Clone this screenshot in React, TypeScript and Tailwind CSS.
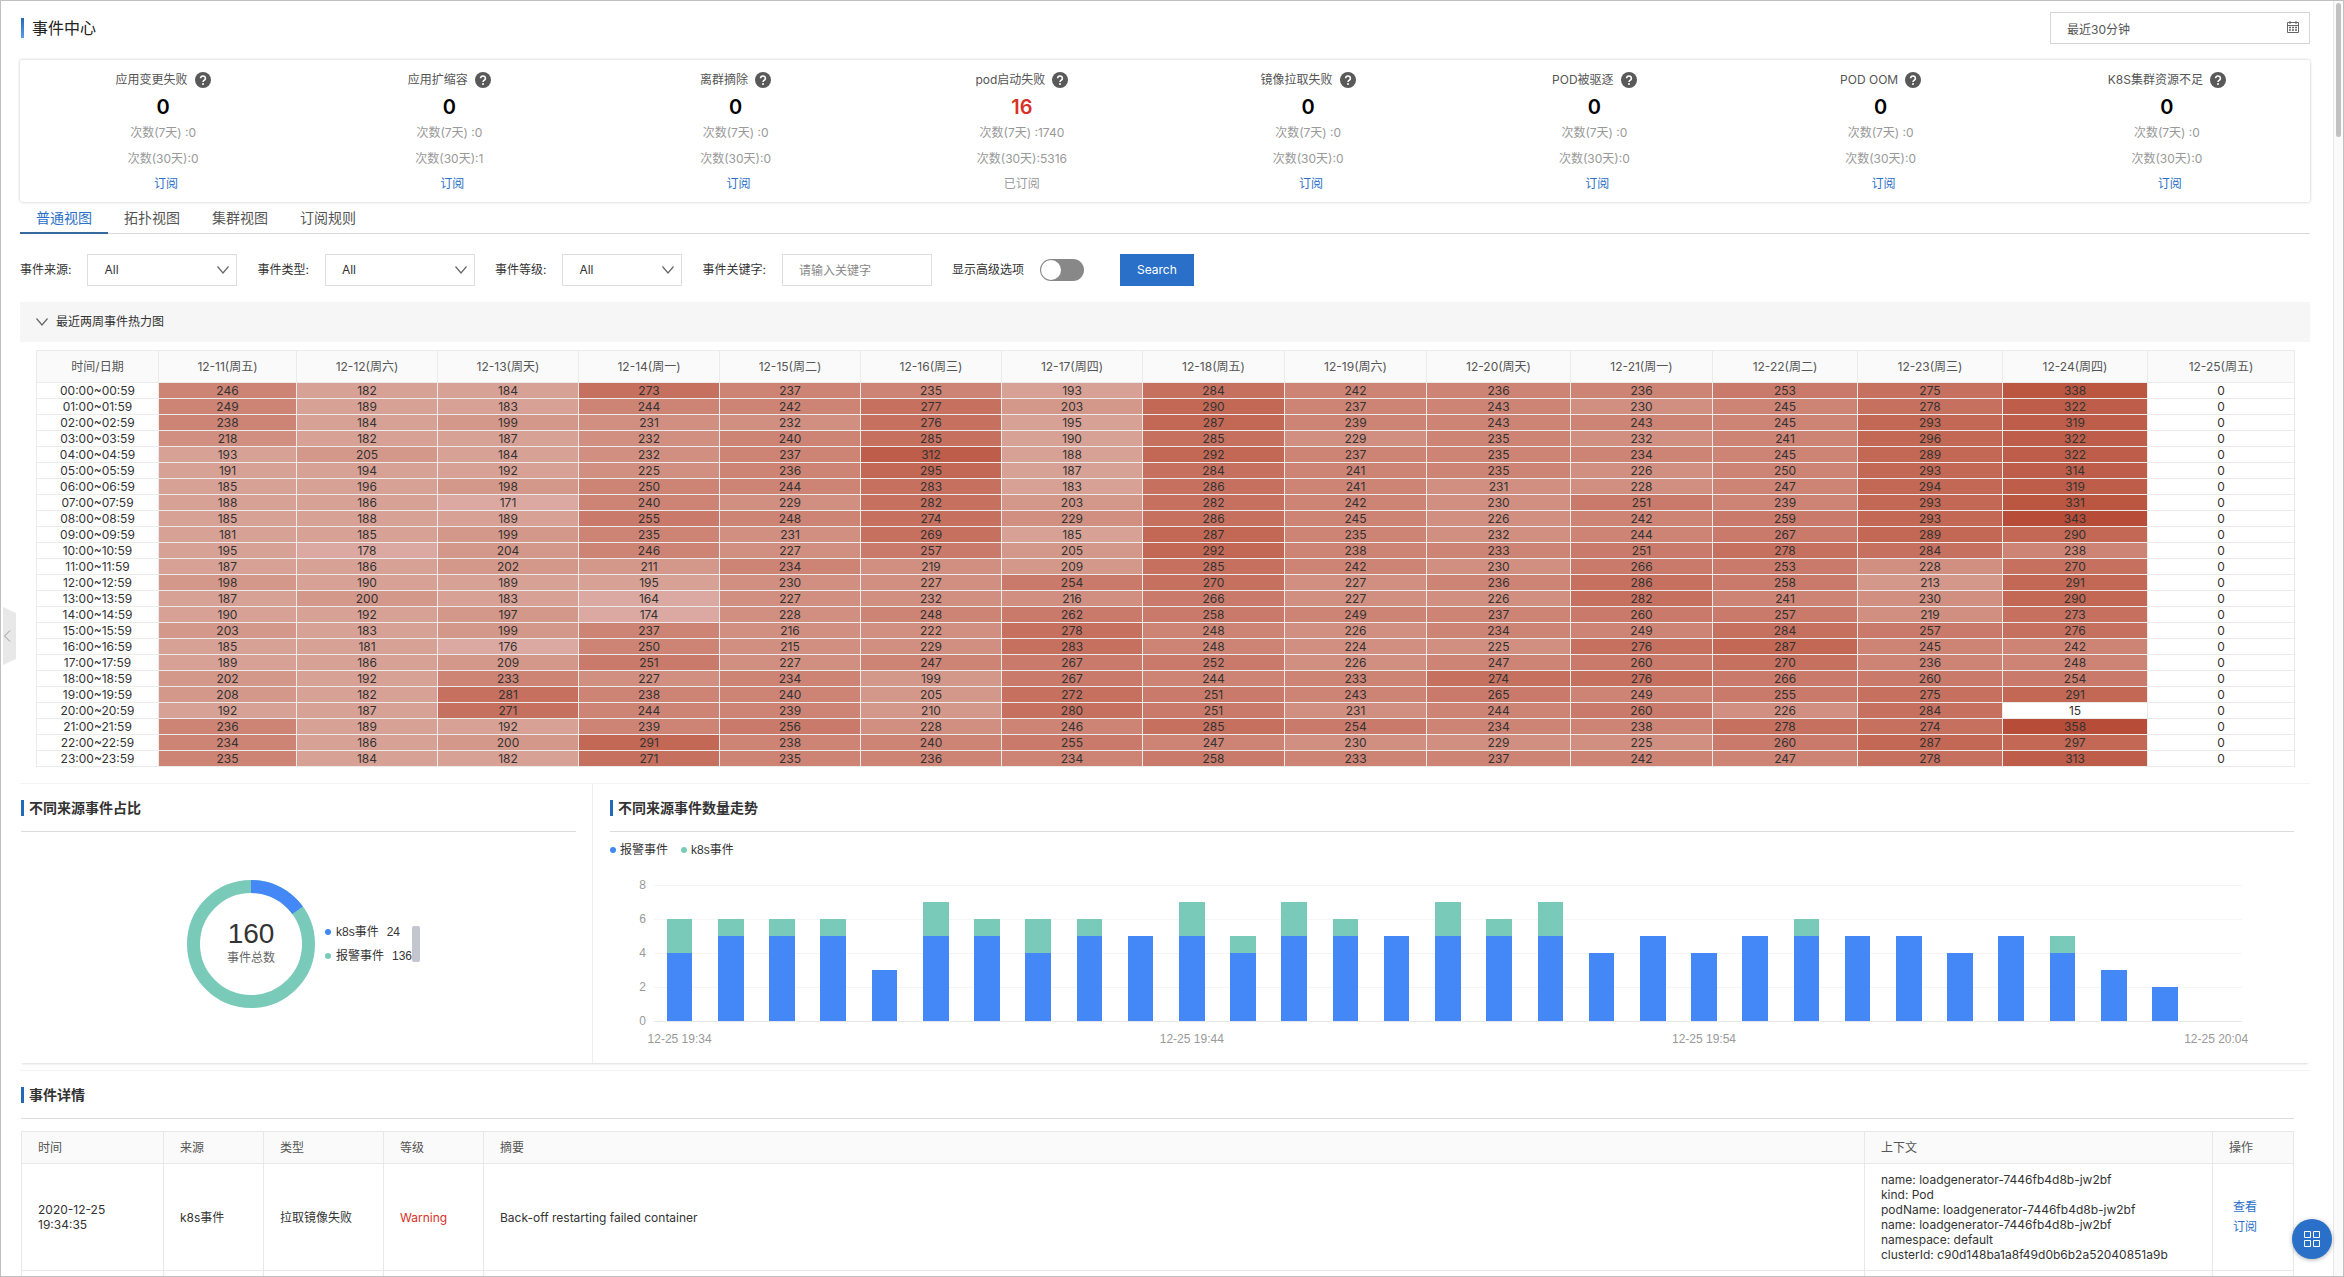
import { ReactNode } from "react";
import { clsx } from "clsx";

const stats = [
  { name: "应用变更失败", count: 0, week: 0, month: 0 },
  { name: "应用扩缩容", count: 0, week: 0, month: 1 },
  { name: "离群摘除", count: 0, week: 0, month: 0 },
  { name: "pod启动失败", count: 16, week: 1740, month: 5316, subscribed: true },
  { name: "镜像拉取失败", count: 0, week: 0, month: 0 },
  { name: "POD被驱逐", count: 0, week: 0, month: 0 },
  { name: "POD OOM", count: 0, week: 0, month: 0 },
  { name: "K8S集群资源不足", count: 0, week: 0, month: 0 },
];

const tabs = ["普通视图", "拓扑视图", "集群视图", "订阅规则"];

const days = [
  { label: "12-11(周五)", width: 138 },
  { label: "12-12(周六)", width: 141 },
  { label: "12-13(周天)", width: 141 },
  { label: "12-14(周一)", width: 141 },
  { label: "12-15(周二)", width: 141 },
  { label: "12-16(周三)", width: 141 },
  { label: "12-17(周四)", width: 141 },
  { label: "12-18(周五)", width: 142 },
  { label: "12-19(周六)", width: 142 },
  { label: "12-20(周天)", width: 144 },
  { label: "12-21(周一)", width: 142 },
  { label: "12-22(周二)", width: 145 },
  { label: "12-23(周三)", width: 145 },
  { label: "12-24(周四)", width: 145 },
  { label: "12-25(周五)", width: 147 },
];

const heat = [
  [246, 182, 184, 273, 237, 235, 193, 284, 242, 236, 236, 253, 275, 338, 0],
  [249, 189, 183, 244, 242, 277, 203, 290, 237, 243, 230, 245, 278, 322, 0],
  [238, 184, 199, 231, 232, 276, 195, 287, 239, 243, 243, 245, 293, 319, 0],
  [218, 182, 187, 232, 240, 285, 190, 285, 229, 235, 232, 241, 296, 322, 0],
  [193, 205, 184, 232, 237, 312, 188, 292, 237, 235, 234, 245, 289, 322, 0],
  [191, 194, 192, 225, 236, 295, 187, 284, 241, 235, 226, 250, 293, 314, 0],
  [185, 196, 198, 250, 244, 283, 183, 286, 241, 231, 228, 247, 294, 319, 0],
  [188, 186, 171, 240, 229, 282, 203, 282, 242, 230, 251, 239, 293, 331, 0],
  [185, 188, 189, 255, 248, 274, 229, 286, 245, 226, 242, 259, 293, 343, 0],
  [181, 185, 199, 235, 231, 269, 185, 287, 235, 232, 244, 267, 289, 290, 0],
  [195, 178, 204, 246, 227, 257, 205, 292, 238, 233, 251, 278, 284, 238, 0],
  [187, 186, 202, 211, 234, 219, 209, 285, 242, 230, 266, 253, 228, 270, 0],
  [198, 190, 189, 195, 230, 227, 254, 270, 227, 236, 286, 258, 213, 291, 0],
  [187, 200, 183, 164, 227, 232, 216, 266, 227, 226, 282, 241, 230, 290, 0],
  [190, 192, 197, 174, 228, 248, 262, 258, 249, 237, 260, 257, 219, 273, 0],
  [203, 183, 199, 237, 216, 222, 278, 248, 226, 234, 249, 284, 257, 276, 0],
  [185, 181, 176, 250, 215, 229, 283, 248, 224, 225, 276, 287, 245, 242, 0],
  [189, 186, 209, 251, 227, 247, 267, 252, 226, 247, 260, 270, 236, 248, 0],
  [202, 192, 233, 227, 234, 199, 267, 244, 233, 274, 276, 266, 260, 254, 0],
  [208, 182, 281, 238, 240, 205, 272, 251, 243, 265, 249, 255, 275, 291, 0],
  [192, 187, 271, 244, 239, 210, 280, 251, 231, 244, 260, 226, 284, 15, 0],
  [236, 189, 192, 239, 256, 228, 246, 285, 254, 234, 238, 278, 274, 358, 0],
  [234, 186, 200, 291, 238, 240, 255, 247, 230, 229, 225, 260, 287, 297, 0],
  [235, 184, 182, 271, 235, 236, 234, 258, 233, 237, 242, 247, 278, 313, 0],
];

const MAX_HEAT = 358;

// lightest to darkest, each one covers a twentieth of the maximum
const heatColors = [
  "bg-[#dba9a1]",
  "bg-[#d8a196]",
  "bg-[#d4988a]",
  "bg-[#d08f80]",
  "bg-[#cd8475]",
  "bg-[#c97a6a]",
  "bg-[#c67060]",
  "bg-[#c26854]",
  "bg-[#be5e4a]",
  "bg-[#bb5641]",
  "bg-[#b74d38]",
];

function heatColor(value: number) {
  const level = Math.floor((value / MAX_HEAT) * 20);
  if (level < 9) return "bg-white";
  return heatColors[Math.min(level - 9, heatColors.length - 1)];
}

function hourRange(hour: number) {
  const h = String(hour).padStart(2, "0");
  return `${h}:00~${h}:59`;
}

// [报警事件, k8s事件] per minute
const trend = [
  [4, 2], [5, 1], [5, 1], [5, 1], [3, 0], [5, 2], [5, 1], [4, 2], [5, 1], [5, 0],
  [5, 2], [4, 1], [5, 2], [5, 1], [5, 0], [5, 2], [5, 1], [5, 2], [4, 0], [5, 0],
  [4, 0], [5, 0], [5, 1], [5, 0], [5, 0], [4, 0], [5, 0], [4, 1], [3, 0], [2, 0],
  [0, 0],
];

const trendLabels: Record<number, string> = {
  0: "12-25 19:34",
  10: "12-25 19:44",
  20: "12-25 19:54",
  30: "12-25 20:04",
};

const contextLines = [
  "name: loadgenerator-7446fb4d8b-jw2bf",
  "kind: Pod",
  "podName: loadgenerator-7446fb4d8b-jw2bf",
  "name: loadgenerator-7446fb4d8b-jw2bf",
  "namespace: default",
  "clusterId: c90d148ba1a8f49d0b6b2a52040851a9b",
];

function HelpIcon() {
  return (
    <svg viewBox="0 0 16 16" className="size-4" aria-hidden="true">
      <circle cx="8" cy="8" r="8" fill="#595959" />
      <path d="M5.6 6.3a2.4 2.3 0 1 1 3.7 1.9C8.4 8.8 8 9.1 8 10" fill="none" stroke="#fff" strokeWidth="1.6" />
      <circle cx="8" cy="12" r="1" fill="#fff" />
    </svg>
  );
}

function CalendarIcon({ className }: { className?: string }) {
  return (
    <svg viewBox="0 0 12 12" className={clsx("size-3", className)} fill="none" stroke="#666" aria-hidden="true">
      <path d="M.5 1.5h11v10H.5zM.5 4.5h11M3 0v3M9 0v3" />
      <path d="M2 6.5h8M2 9h8" strokeWidth="1.4" strokeDasharray="2 1" />
    </svg>
  );
}

function ChevronDown({ className }: { className?: string }) {
  return (
    <svg viewBox="0 0 12 8" className={clsx("h-2 w-3", className)} fill="none" stroke="#666" strokeWidth="1.2" aria-hidden="true">
      <path d="M.5.5 6 7 11.5.5" />
    </svg>
  );
}

function SectionTitle({ children }: { children: ReactNode }) {
  return (
    <div className="flex h-12 items-center border-b border-[#dcdcdc]">
      <h2 className="border-l-3 border-[#2468b8] pl-[5px] text-sm leading-4 font-semibold text-[#333]">{children}</h2>
    </div>
  );
}

function Select({ id, label, className }: { id: string; label: string; className: string }) {
  return (
    <div className="mr-5 flex items-center gap-4">
      <label htmlFor={id}>{label}</label>
      <div className={clsx("relative", className)}>
        <select id={id} className="h-8 w-full appearance-none border border-[#dedede] bg-white pl-4 text-[#333]">
          <option>All</option>
        </select>
        <ChevronDown className="pointer-events-none absolute top-3 right-2" />
      </div>
    </div>
  );
}

function StatPanel() {
  return (
    <section className="grid grid-cols-8 rounded-xs py-2 text-center shadow-[0_0_3px_rgba(0,0,0,0.25)]">
      {stats.map((s) => (
        <div key={s.name} className="flex flex-col items-center">
          <div className="flex h-6 items-center gap-[7px] text-[#555]">
            {s.name}
            <HelpIcon />
          </div>
          <strong className={clsx("text-xl leading-[30px] font-semibold", s.count ? "text-[#d93026]" : "text-black")}>
            {s.count}
          </strong>
          <span className="h-[26px] leading-[22px] text-[#999]">次数(7天) :{s.week}</span>
          <span className="h-[26px] leading-[22px] text-[#999]">次数(30天):{s.month}</span>
          {s.subscribed ? (
            <span className="leading-5 text-[#999]">已订阅</span>
          ) : (
            <a href="#" className="pl-[6px] leading-5 text-[#2a70c8]">订阅</a>
          )}
        </div>
      ))}
    </section>
  );
}

function Filters() {
  return (
    <form className="flex items-center pt-5 pb-4 text-[#333]" onSubmit={(e) => e.preventDefault()}>
      <Select id="source" label="事件来源:" className="w-[150px]" />
      <Select id="type" label="事件类型:" className="w-[150px]" />
      <Select id="level" label="事件等级:" className="w-[120px]" />
      <div className="mr-5 flex items-center gap-4">
        <label htmlFor="keyword">事件关键字:</label>
        <input
          id="keyword"
          type="text"
          placeholder="请输入关键字"
          className="h-8 w-[150px] border border-[#dedede] px-4 placeholder:text-[#888]"
        />
      </div>
      <label className="flex items-center gap-4">
        显示高级选项
        <input type="checkbox" role="switch" className="sr-only" />
        <span className="flex h-[22px] w-11 items-center rounded-full bg-[#888] p-px">
          <span className="size-5 rounded-full bg-white" />
        </span>
      </label>
      <button type="submit" className="ml-9 h-8 w-[74px] bg-[#2a70c8] text-white">
        Search
      </button>
    </form>
  );
}

function HeatTable() {
  return (
    <table className="w-full table-fixed border-collapse text-center text-[#333]">
      <colgroup>
        <col className="w-[122px]" />
        {days.map((d) => (
          <col key={d.label} style={{ width: d.width }} />
        ))}
      </colgroup>
      <thead>
        <tr className="h-8 bg-[#fafafa] text-[#555]">
          <th className="border border-[#ebebeb] font-normal">时间/日期</th>
          {days.map((d) => (
            <th key={d.label} className="border border-[#ebebeb] font-normal">{d.label}</th>
          ))}
        </tr>
      </thead>
      <tbody>
        {heat.map((row, hour) => (
          <tr key={hour} className="h-4 leading-[15px]">
            <th scope="row" className="border border-[#ebebeb] font-normal">{hourRange(hour)}</th>
            {row.map((value, i) => (
              <td key={i} className={clsx("border border-[#ebebeb]", heatColor(value))}>{value}</td>
            ))}
          </tr>
        ))}
      </tbody>
    </table>
  );
}

function Dot({ className }: { className: string }) {
  return <span className={clsx("size-[6px] rounded-full", className)} />;
}

function SourceShare() {
  return (
    <div className="w-[573px] shrink-0 border-r border-[#efefef] pr-4 pl-px font-['Liberation_Sans','Noto_Sans_CJK_SC',sans-serif]">
      <SectionTitle>不同来源事件占比</SectionTitle>
      <div className="flex items-center pt-12 pl-[166px]">
        <div className="relative size-32">
          <svg viewBox="0 0 128 128" fill="none" strokeWidth="13" aria-hidden="true">
            <circle cx="64" cy="64" r="57.5" stroke="#7acaba" />
            <circle
              cx="64"
              cy="64"
              r="57.5"
              stroke="#4487f6"
              pathLength="160"
              strokeDasharray="24 136"
              transform="rotate(-90 64 64)"
            />
          </svg>
          <div className="absolute inset-0 flex flex-col items-center justify-center">
            <span className="text-[28px] leading-7 text-[#333]">160</span>
            <span className="leading-5 text-[#666]">事件总数</span>
          </div>
        </div>
        <div className="flex items-center pl-[10px] text-[#333]">
          <ul className="flex flex-col gap-2 leading-4">
            <li className="flex items-center">
              <Dot className="mr-[5px] bg-[#4487f6]" />
              k8s事件<span className="ml-2">24</span>
            </li>
            <li className="flex items-center">
              <Dot className="mr-[5px] bg-[#7acaba]" />
              报警事件<span className="ml-2">136</span>
            </li>
          </ul>
          <div className="h-9 w-2 rounded-xs bg-[#c3c5cf]" />
        </div>
      </div>
    </div>
  );
}

function TrendChart() {
  return (
    <div className="grow pr-4 pl-[17px] font-['Liberation_Sans','Noto_Sans_CJK_SC',sans-serif]">
      <SectionTitle>不同来源事件数量走势</SectionTitle>
      <ul className="flex h-9 items-center gap-[13px] text-[#333]">
        <li className="flex items-center gap-1"><Dot className="bg-[#4487f6]" />报警事件</li>
        <li className="flex items-center gap-1"><Dot className="bg-[#7acaba]" />k8s事件</li>
      </ul>
      <div className="flex pr-[52px] text-[#999]">
        <div className="flex w-11 flex-col pr-2 text-right leading-[34px]">
          {[8, 6, 4, 2, 0].map((n) => (
            <span key={n}>{n}</span>
          ))}
        </div>
        <div className="relative grow pt-[17px]">
          {/* grid lines behind the bars */}
          <div className="absolute inset-x-0 top-[17px]">
            {[8, 6, 4, 2].map((n) => (
              <div key={n} className="h-[34px] border-t border-[#f5f5f5]" />
            ))}
          </div>
          <div className="relative flex h-[137px] items-end border-b border-[#e6e6e6]">
            {trend.map(([alarm, k8s], i) => (
              <div key={i} className="flex flex-1 flex-col items-center">
                <div className="w-1/2 bg-[#7acaba]" style={{ height: k8s * 17 }} />
                <div className="w-1/2 bg-[#4487f6]" style={{ height: alarm * 17 }} />
              </div>
            ))}
          </div>
          <div className="flex pt-[9px] leading-4">
            {trend.map((_, i) => (
              <div key={i} className="flex w-0 flex-1 justify-center whitespace-nowrap">{trendLabels[i]}</div>
            ))}
          </div>
        </div>
      </div>
    </div>
  );
}

function EventTable() {
  const th = "border border-[#e8e8e8] px-4 text-left font-normal";
  const td = "border border-[#e8e8e8] px-4";
  return (
    <table className="mt-3 w-full table-fixed border-collapse leading-[15px] text-[#333]">
      <colgroup>
        <col className="w-[142px]" />
        <col className="w-[100px]" />
        <col className="w-[120px]" />
        <col className="w-[100px]" />
        <col />
        <col className="w-[348px]" />
        <col className="w-[81px]" />
      </colgroup>
      <thead>
        <tr className="h-8 bg-[#fafafa] text-[#555]">
          <th className={th}>时间</th>
          <th className={th}>来源</th>
          <th className={th}>类型</th>
          <th className={th}>等级</th>
          <th className={th}>摘要</th>
          <th className={th}>上下文</th>
          <th className={th}>操作</th>
        </tr>
      </thead>
      <tbody>
        <tr className="h-[107px]">
          <td className={td}>2020-12-25<br />19:34:35</td>
          <td className={td}>k8s事件</td>
          <td className={td}>拉取镜像失败</td>
          <td className={clsx(td, "text-[#d93026]")}>Warning</td>
          <td className={td}>Back-off restarting failed container</td>
          <td className={td}>
            {contextLines.map((line, i) => (
              <div key={i}>{line}</div>
            ))}
          </td>
          <td className={clsx(td, "leading-5 text-[#2a70c8]")}>
            <a href="#" className="block pl-1">查看</a>
            <a href="#" className="block pl-1">订阅</a>
          </td>
        </tr>
        <tr className="h-8">
          {[0, 1, 2, 3, 4, 5, 6].map((i) => (
            <td key={i} className={td} />
          ))}
        </tr>
      </tbody>
    </table>
  );
}

export default function App() {
  return (
    <div className="relative flex h-screen overflow-hidden border border-[#c0c0c0] bg-white font-[Inter,'Noto_Sans_CJK_SC',sans-serif] text-xs">
      <main className="h-max min-w-0 grow pr-[23px] pl-[19px]">
        <header className="flex items-center justify-between pt-[11px] pb-4">
          <h1 className="ml-px flex items-center gap-2 text-base leading-5 text-[#222]">
            <span className="h-5 w-[3px] bg-linear-to-b from-[#2468b8] to-[#5a9ee8]" />
            事件中心
          </h1>
          <div className="relative">
            <input
              type="text"
              readOnly
              aria-label="时间范围"
              value="最近30分钟"
              className="block h-8 w-[260px] border border-[#d5d5d5] px-4 text-[#555]"
            />
            <CalendarIcon className="pointer-events-none absolute top-[9px] right-[11px]" />
          </div>
        </header>

        <StatPanel />

        <nav className="flex h-8 border-b border-[#d9d9d9] text-sm">
          {tabs.map((tab, i) => (
            <a
              key={tab}
              href="#"
              className={clsx("h-8 px-4 leading-8", i === 0 ? "border-b-2 border-[#35699f] text-[#2a70c8]" : "text-[#555]")}
            >
              {tab}
            </a>
          ))}
        </nav>

        <Filters />

        <section>
          <button type="button" className="flex h-10 w-full items-center gap-2 bg-[#f6f6f6] pl-4 text-[#333]">
            <ChevronDown />
            最近两周事件热力图
          </button>
          <div className="px-4 pt-2">
            <HeatTable />
          </div>
        </section>

        <section className="mt-4 flex h-[280px] border-t border-[#f3f3f3] shadow-[0_3px_2px_-2px_rgba(0,0,0,0.15)]">
          <SourceShare />
          <TrendChart />
        </section>

        <section className="mt-[7px] border-t border-[#f3f3f3] pr-4 pl-px">
          <SectionTitle>事件详情</SectionTitle>
          <EventTable />
        </section>
      </main>

      <div className="flex w-[10px] shrink-0 justify-center border-l border-[#e8e8e8] bg-[#fafafa] pt-[2px]">
        <div className="h-[134px] w-[5px] rounded-full bg-[#c1c1c1]" />
      </div>

      <button type="button" aria-label="收起" className="absolute top-[606px] left-[2px]">
        <svg viewBox="0 0 13 58" className="h-[58px] w-[13px]" fill="none" aria-hidden="true">
          <path d="M0 0 13 6v46L0 58z" fill="#e8e8e8" />
          <path d="M7 23.5 1.5 29 7 34.5" stroke="#999" />
        </svg>
      </button>

      <button
        type="button"
        aria-label="应用"
        className="absolute right-[11px] bottom-[17px] flex size-10 items-center justify-center rounded-full bg-[#2a70c8] shadow-[0_1px_4px_rgba(0,0,0,0.3)]"
      >
        <svg viewBox="0 0 16 16" className="size-4" fill="none" stroke="#fff" aria-hidden="true">
          <path d="M.5.5h6v6h-6zM9.5.5h6v6h-6zM.5 9.5h6v6h-6zM9.5 9.5h6v6h-6z" />
        </svg>
      </button>
    </div>
  );
}
